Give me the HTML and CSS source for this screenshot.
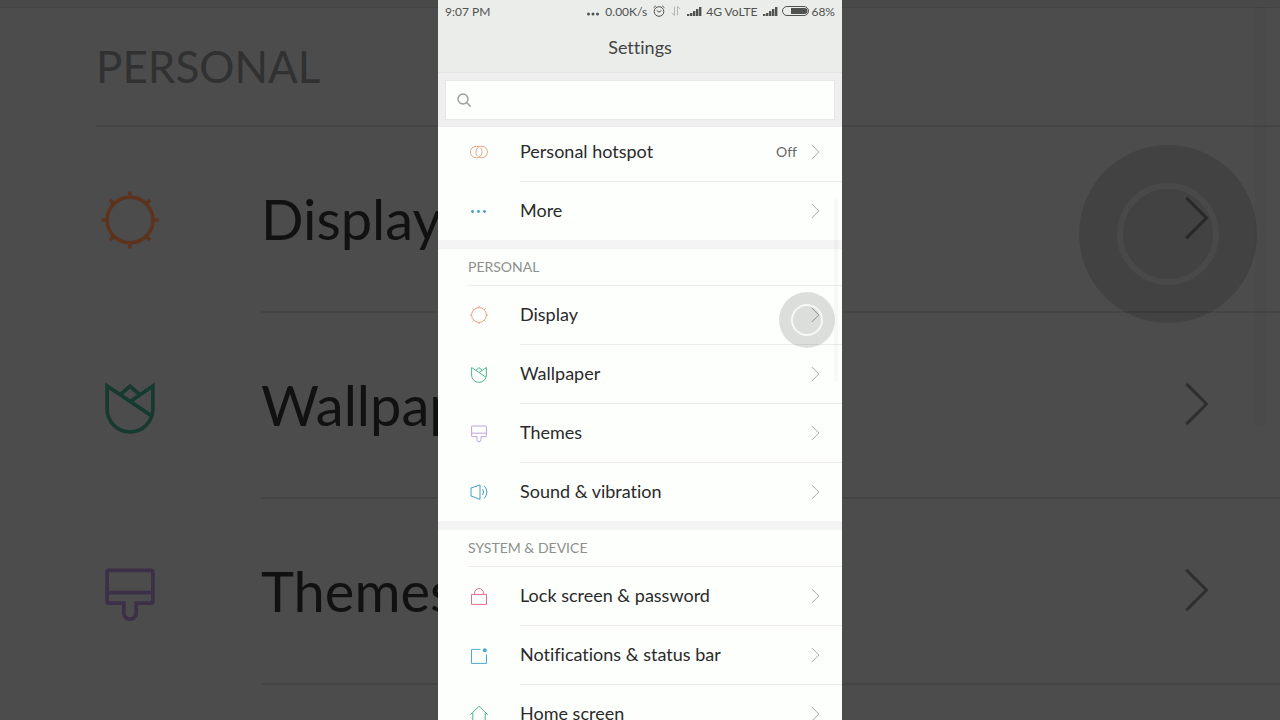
FILE: index.html
```
<!DOCTYPE html>
<html lang="en">
<head>
    <meta charset="UTF-8">
    <meta name="viewport" content="width=device-width, initial-scale=1.0">
    <title>Settings</title>
    <link rel="stylesheet" href="styles.css">
</head>
<body>
    <!-- Shared icons -->
    <svg class="sprite" aria-hidden="true">
        <symbol id="i-hotspot" viewBox="0 0 22 22">
            <path d="M11.2 6.1A5.8 5.8 0 1 0 8.4 16.8C10.6 16.8 12.2 15.6 13.3 14C14.7 11.6 14.2 8.6 12.6 6.9"/>
            <path d="M10.6 15.9A5.8 5.8 0 1 0 13.4 5.2C11.2 5.2 9.8 6.3 8.8 8C7.4 10.4 7.8 13.4 9.3 15.1"/>
        </symbol>
        <symbol id="i-more" viewBox="0 0 22 22">
            <g fill="currentColor" stroke="none"><circle cx="4.5" cy="11.5" r="1.4"/><circle cx="10.5" cy="11.5" r="1.4"/><circle cx="16.5" cy="11.5" r="1.4"/></g>
        </symbol>
        <symbol id="i-display" viewBox="0 0 22 22">
            <circle cx="11" cy="11" r="7.4"/>
            <path d="M11 1.8v1.8M11 18.4v1.8M1.8 11h1.8M18.4 11h1.8M4.5 4.5l1.3 1.3M16.2 16.2l1.3 1.3M4.5 17.5l1.3-1.3M16.2 5.8l1.3-1.3"/>
        </symbol>
        <symbol id="i-wallpaper" viewBox="0 0 22 22">
            <path d="M18 14.2L3.6 4.5V12a7.4 7.4 0 0 0 14.8 0V4.5L11 9.6M8 7.2l3-2.6 3 2.6"/>
        </symbol>
        <symbol id="i-themes" viewBox="0 0 22 22">
            <path d="M9 14.6H4.2a.6.6 0 0 1-.6-.6V4.6a.6.6 0 0 1 .6-.6h13.6a.6.6 0 0 1 .6.6V14a.6.6 0 0 1-.6.6H13v3.2a2 2 0 0 1-4 0zM3.6 11.200h14.8"/>
        </symbol>
        <symbol id="i-sound" viewBox="0 0 22 22">
            <path d="M12 4L3 7v8l9 3.4zM14.5 8.2q2.4 2.8 0 5.8M16.2 4.8q5.4 6.2 0 12.6"/>
        </symbol>
        <symbol id="i-lock" viewBox="0 0 22 22">
            <path d="M3.5 9.4h15v10h-15zM6.600 9.4V8a4.4 4.4 0 0 1 8.8 0v1.4"/>
        </symbol>
        <symbol id="i-notify" viewBox="0 0 22 22">
            <path d="M12.5 5.4h-9v14h15v-9"/>
            <circle cx="16.8" cy="6.3" r="2" fill="currentColor" stroke="none"/>
        </symbol>
        <symbol id="i-home" viewBox="0 0 22 22">
            <path d="M2.4 11.6L11 3.2l8.6 8.4M4.8 10v9.4h12.4V10"/>
        </symbol>
        <symbol id="i-chevron" viewBox="0 0 9 16">
            <path d="M.8 1l7 7-7 7"/>
        </symbol>
        <symbol id="i-signal" viewBox="0 0 15 12">
            <path fill="currentColor" stroke="none" d="M0 9h2.400v2H0zM3 8h2.400v3H3zM6 6h2.400v5H6zM9 4h2.400v7H9zM12 2h2.400v9H12z"/>
        </symbol>
    </svg>

    <div class="stage">
        <!-- Enlarged, dimmed list behind the phone -->
        <div class="backdrop" aria-hidden="true">
            <div class="back-title">PERSONAL</div>
            <div class="back-row">
                <svg class="back-icon orange"><use href="#i-display"/></svg>
                <div class="back-body"><span>Display</span><svg class="back-chevron"><use href="#i-chevron"/></svg></div>
                <div class="back-touch"></div>
            </div>
            <div class="back-row">
                <svg class="back-icon green"><use href="#i-wallpaper"/></svg>
                <div class="back-body"><span>Wallpaper</span><svg class="back-chevron"><use href="#i-chevron"/></svg></div>
            </div>
            <div class="back-row">
                <svg class="back-icon purple"><use href="#i-themes"/></svg>
                <div class="back-body"><span>Themes</span><svg class="back-chevron"><use href="#i-chevron"/></svg></div>
            </div>
            <div class="back-scroll"></div>
        </div>

        <main class="phone">
            <header class="header">
                <div class="status">
                    <span class="time">9:07 PM</span>
                    <svg class="dots" viewBox="0 0 12 12"><g fill="currentColor" stroke="none"><circle cx="1.500" cy="9" r="1.500"/><circle cx="6" cy="9" r="1.500"/><circle cx="10.500" cy="9" r="1.500"/></g></svg>
                    <span class="speed">0.00K/s</span>
                    <svg class="alarm" viewBox="0 0 12 12"><circle cx="6" cy="6.500" r="4.800"/><path d="M3.800 5.500L6 7.200l2.400-1.700M.6 2.600L2.800.8M11.400 2.600L9.200.8"/></svg>
                    <svg class="arrows" viewBox="0 0 10 12"><path d="M3.500 1.500v9L.8 8M6.500 10.500v-9L9.200 4"/></svg>
                    <svg class="signal"><use href="#i-signal"/></svg>
                    <span class="network">4G VoLTE</span>
                    <svg class="signal"><use href="#i-signal"/></svg>
                    <svg class="battery" viewBox="0 0 27 10"><rect x=".5" y=".5" width="26" height="9" rx="4.500"/><path fill="currentColor" stroke="none" d="M9 2h13.500a3 3 0 0 1 0 6H9z"/></svg>
                    <span>68%</span>
                </div>
                <h1>Settings</h1>
            </header>

            <div class="search">
                <label class="search-box">
                    <svg viewBox="0 0 14 14"><circle cx="6" cy="6" r="5"/><path d="M9.600 9.600l4 4"/></svg>
                    <input type="search" aria-label="Search settings">
                </label>
            </div>

            <div class="list">
                <section class="group">
                    <a class="row" href="#">
                        <svg class="icon orange"><use href="#i-hotspot"/></svg>
                        <span class="row-body"><span class="label">Personal hotspot</span><span class="value">Off</span><svg class="chevron"><use href="#i-chevron"/></svg></span>
                    </a>
                    <a class="row" href="#">
                        <svg class="icon blue"><use href="#i-more"/></svg>
                        <span class="row-body"><span class="label">More</span><svg class="chevron"><use href="#i-chevron"/></svg></span>
                    </a>
                </section>

                <section class="group">
                    <h2>PERSONAL</h2>
                    <a class="row" href="#">
                        <svg class="icon orange"><use href="#i-display"/></svg>
                        <span class="row-body"><span class="label">Display</span><svg class="chevron"><use href="#i-chevron"/></svg></span>
                        <span class="touch"></span>
                    </a>
                    <a class="row" href="#">
                        <svg class="icon green"><use href="#i-wallpaper"/></svg>
                        <span class="row-body"><span class="label">Wallpaper</span><svg class="chevron"><use href="#i-chevron"/></svg></span>
                    </a>
                    <a class="row" href="#">
                        <svg class="icon purple"><use href="#i-themes"/></svg>
                        <span class="row-body"><span class="label">Themes</span><svg class="chevron"><use href="#i-chevron"/></svg></span>
                    </a>
                    <a class="row" href="#">
                        <svg class="icon blue"><use href="#i-sound"/></svg>
                        <span class="row-body"><span class="label">Sound &amp; vibration</span><svg class="chevron"><use href="#i-chevron"/></svg></span>
                    </a>
                </section>

                <section class="group">
                    <h2>SYSTEM &amp; DEVICE</h2>
                    <a class="row" href="#">
                        <svg class="icon red"><use href="#i-lock"/></svg>
                        <span class="row-body"><span class="label">Lock screen &amp; password</span><svg class="chevron"><use href="#i-chevron"/></svg></span>
                    </a>
                    <a class="row" href="#">
                        <svg class="icon sky"><use href="#i-notify"/></svg>
                        <span class="row-body"><span class="label">Notifications &amp; status bar</span><svg class="chevron"><use href="#i-chevron"/></svg></span>
                    </a>
                    <a class="row" href="#">
                        <svg class="icon green"><use href="#i-home"/></svg>
                        <span class="row-body"><span class="label">Home screen</span><svg class="chevron"><use href="#i-chevron"/></svg></span>
                    </a>
                </section>
                <div class="scroll-thumb"></div>
            </div>
        </main>
    </div>
</body>
</html>
```
FILE: styles.css
```
* {
    box-sizing: border-box;
}
body {
    margin: 0;
    font-family: Lato, "Open Sans", sans-serif;
    font-variant-ligatures: none;
    background-color: #4c4c4c;
}
svg {
    display: block;
    flex: none;
    fill: none;
    stroke: currentColor;
}
.sprite {
    position: absolute;
    width: 0;
    height: 0;
}
/* Backdrop and phone share one grid cell */
.stage {
    display: grid;
    height: 100vh;
    overflow: hidden;
}
.backdrop, .phone {
    grid-area: 1 / 1;
    min-height: 0;
    overflow: hidden;
}

/* Backdrop */
.backdrop {
    position: relative;
    border-top: 7px solid #494949;
    color: #111;
}
.back-title {
    margin-left: 96px;
    height: 120px;
    line-height: 118px;
    font-size: 44px;
    color: #313131;
    border-bottom: 2px solid #454545;
}
.backdrop::before {
    content: "";
    display: block;
    height: 1px;
    margin-bottom: -1px;
    background-color: #444;
}
.back-row {
    position: relative;
    display: flex;
    align-items: center;
    height: 186px;
    padding-left: 96px;
}
.back-icon {
    width: 68px;
    height: 68px;
    margin-right: 97px;
    stroke-width: 1.2;
}
.back-body {
    flex: 1;
    height: 100%;
    display: flex;
    align-items: center;
    justify-content: space-between;
    padding-right: 70px;
    padding-bottom: 2px;
    font-size: 56px;
    border-bottom: 2px solid #454545;
}
.back-chevron {
    width: 26px;
    height: 46px;
    color: #2e2e2e;
}
.back-icon.orange {
    color: #5b3420;
}
.back-icon.green {
    color: #173a30;
}
.back-icon.purple {
    color: #3b3048;
}
.back-touch {
    position: absolute;
    top: 18px;
    right: 23px;
    width: 178px;
    height: 178px;
    border-radius: 50%;
    background-color: rgba(0, 0, 0, 0.13);
    z-index: 1;
}
.back-touch::after {
    content: "";
    position: absolute;
    inset: 38px;
    border: 6px solid rgba(255, 255, 255, 0.04);
    border-radius: 50%;
}
.back-scroll {
    position: absolute;
    top: 0;
    right: 13px;
    width: 12px;
    height: 418px;
    background-color: rgba(0, 0, 0, 0.02);
}

/* Phone */
.phone {
    position: relative;
    z-index: 2;
    justify-self: center;
    width: 404px;
    max-width: 100%;
    display: flex;
    flex-direction: column;
    background-color: #fdfffd;
    color: #2a2a2a;
}
.header {
    background-color: #ebedeb;
    border-bottom: 1px solid #e2e3e2;
}
.status {
    display: flex;
    align-items: center;
    height: 22px;
    padding: 0 7px;
    font-size: 12px;
    color: #4f524f;
}
.time {
    margin-right: auto;
}
.dots {
    width: 12px;
    height: 12px;
    margin-right: 6px;
}
.speed {
    margin-right: 6px;
}
.alarm {
    width: 12px;
    height: 12px;
    margin-right: 6px;
}
.arrows {
    width: 10px;
    height: 12px;
    margin-right: 6px;
    color: #b4b6b4;
}
.signal {
    width: 15px;
    height: 12px;
    margin-right: 4px;
}
.network {
    margin-right: 6px;
}
.battery {
    width: 27px;
    height: 10px;
    margin-right: 2px;
}
h1 {
    margin: 0;
    height: 50px;
    line-height: 50px;
    font-size: 18px;
    font-weight: 400;
    text-align: center;
    color: #444;
}
.search {
    padding: 7px 7px 6px;
    background-color: #eeefee;
    border-bottom: 1px solid #e9eae9;
}
.search-box {
    display: flex;
    align-items: center;
    height: 40px;
    padding: 0 11px;
    background-color: #fdfffd;
    border: 1px solid #e6e8e6;
}
.search-box svg {
    width: 14px;
    height: 14px;
    margin-right: 10px;
    color: #9a9c9a;
    stroke-width: 1.4;
}
.search-box input {
    flex: 1;
    min-width: 0;
    border: 0;
    outline: 0;
    background: none;
    font: inherit;
}
.list {
    position: relative;
    flex: 1;
    min-height: 0;
    overflow: hidden;
}
.group + .group {
    border-top: 9px solid #f3f4f3;
}
/* The list is scrolled slightly past its first row */
.group:first-child {
    margin-top: -4px;
}
h2 {
    margin: 0 0 0 30px;
    height: 37px;
    line-height: 36px;
    font-size: 14px;
    font-weight: 400;
    color: #8d8f8d;
    border-bottom: 1px solid #ebedeb;
}
.row {
    position: relative;
    display: flex;
    align-items: center;
    height: 59px;
    padding-left: 30px;
    color: inherit;
    text-decoration: none;
}
.row:last-child {
    height: 58px;
}
.icon {
    width: 22px;
    height: 22px;
    margin-right: 30px;
    margin-bottom: 1px;
}
.row-body {
    flex: 1;
    height: 100%;
    display: flex;
    align-items: center;
    padding-right: 22px;
    border-bottom: 1px solid #ebedeb;
}
.row:last-child .row-body {
    border-bottom: 0;
}
.label {
    flex: 1;
    padding-bottom: 2px;
    font-size: 18px;
}
.value {
    margin-right: 14px;
    padding-bottom: 2px;
    font-size: 14px;
    color: #666;
}
.chevron {
    width: 9px;
    height: 16px;
    color: #a5a7a5;
}
.orange {
    color: #e8a581;
}
.blue {
    color: #4a9cc8;
}
.green {
    color: #4fb596;
}
.purple {
    color: #bfa3e0;
}
.red {
    color: #dc7387;
}
.sky {
    color: #4aa9cf;
}
.touch {
    position: absolute;
    top: 6px;
    right: 7px;
    width: 56px;
    height: 56px;
    border-radius: 50%;
    background-color: rgba(0, 0, 0, 0.13);
    z-index: 1;
}
.touch::after {
    content: "";
    position: absolute;
    inset: 12px;
    border: 2px solid rgba(255, 255, 255, 0.75);
    border-radius: 50%;
}
.scroll-thumb {
    position: absolute;
    top: 72px;
    right: 4px;
    width: 4px;
    height: 182px;
    background-color: rgba(0, 0, 0, 0.025);
}
```
